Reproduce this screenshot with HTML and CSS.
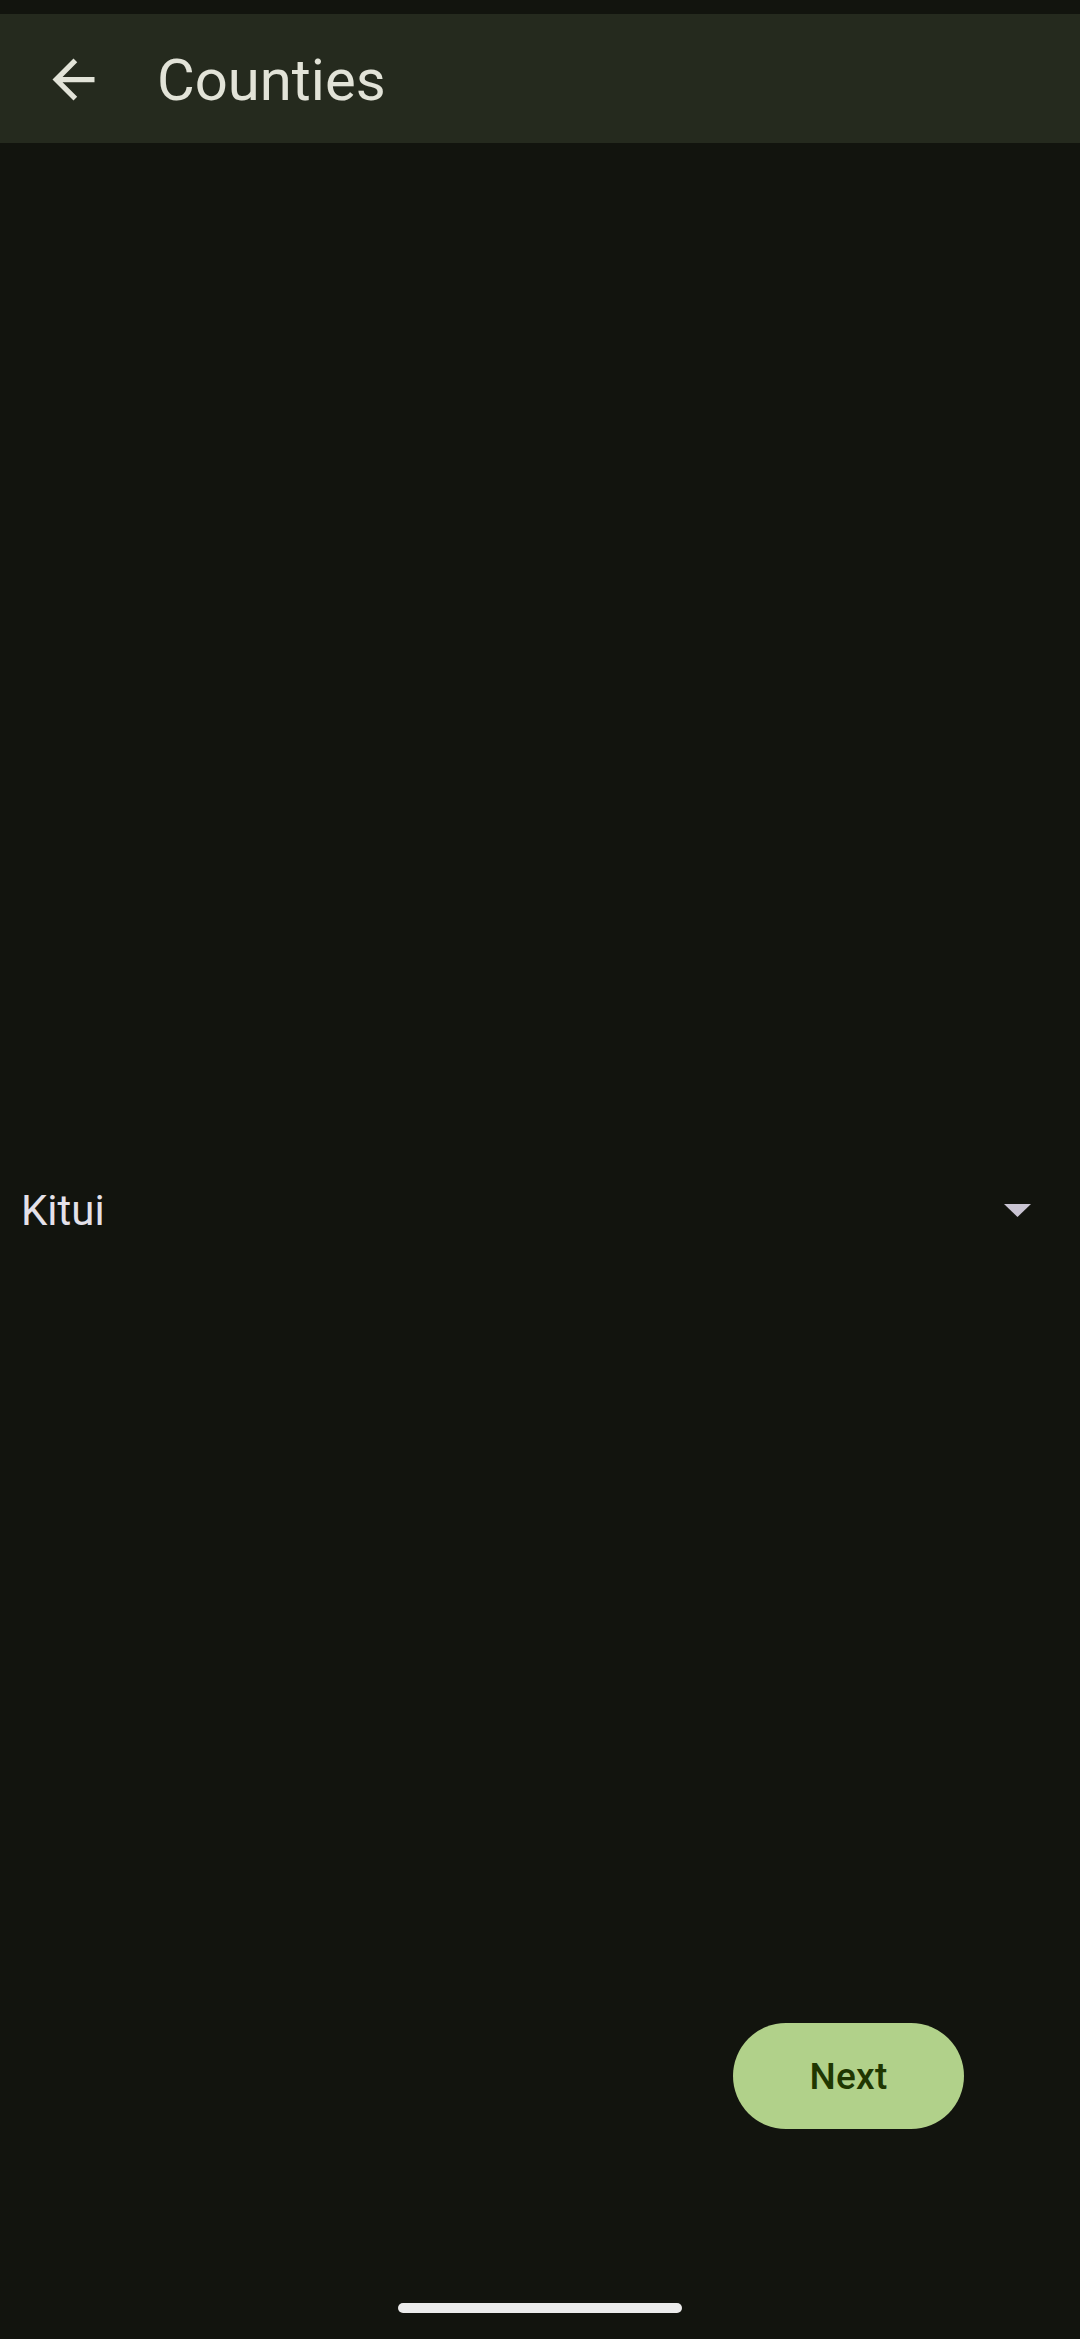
FILE: index.html
```html
<!DOCTYPE html>
<html>
<head>
<meta charset="utf-8">
<link rel="stylesheet" href="styles.css">
</head>
<body>
<div class="screen">
  <div class="status"></div>
  <header class="appbar">
    <svg class="back" viewBox="0 0 24 24"><path d="M20 11H7.83l5.59-5.59L12 4l-8 8 8 8 1.41-1.41L7.83 13H20v-2z" fill="#e2e3d8"/></svg>
    <h1 class="title">Counties</h1>
  </header>
  <main class="content">
    <div class="spinner">
      <span class="spinner-text">Kitui</span>
      <svg class="caret" viewBox="0 0 27 13"><path d="M0 0H27L13.5 13Z" fill="#c9c4d2"/></svg>
    </div>
    <div class="actions">
      <button class="next">Next</button>
    </div>
  </main>
  <div class="navbar"><div class="handle"></div></div>
</div>
</body>
</html>
```
FILE: styles.css
```css
html, body {
  margin: 0;
  padding: 0;
  background: #12140e;
}
.screen {
  width: 1080px;
  height: 2339px;
  display: flex;
  flex-direction: column;
  background: #12140e;
  font-family: Roboto, "Noto Sans", sans-serif;
  overflow: hidden;
}
.status {
  height: 14px;
  flex: none;
}
.appbar {
  height: 129px;
  flex: none;
  background: #252a1e;
  display: flex;
  align-items: center;
  padding-left: 42px;
}
.back {
  width: 63px;
  height: 63px;
  flex: none;
  margin-top: 1px;
}
.title {
  margin: 2px 0 0 52px;
  font-size: 58px;
  font-weight: 400;
  color: #e2e3d8;
  line-height: 1;
}
.content {
  flex: 1;
  display: flex;
  flex-direction: column;
}
.spinner {
  margin-top: 1018px;
  height: 100px;
  display: flex;
  align-items: center;
  justify-content: space-between;
  padding-left: 21px;
  padding-right: 49px;
}
.spinner-text {
  font-size: 42px;
  color: #e4e1e9;
  line-height: 1;
}
.caret {
  width: 27px;
  height: 13px;
  margin-top: -1px;
}
.actions {
  margin-top: 762px;
  display: flex;
  justify-content: flex-end;
  padding-right: 116px;
}
.next {
  width: 231px;
  height: 106px;
  border: none;
  border-radius: 53px;
  background: #b1d18a;
  color: #1f3701;
  font-family: Roboto, "Noto Sans", sans-serif;
  font-size: 37px;
  font-weight: 500;
  padding: 0;
  letter-spacing: 0.3px;
}
.navbar {
  height: 10px;
  flex: none;
  display: flex;
  justify-content: center;
  margin-bottom: 26px;
}
.handle {
  width: 284px;
  height: 10px;
  border-radius: 5px;
  background: #ebebeb;
}
```
